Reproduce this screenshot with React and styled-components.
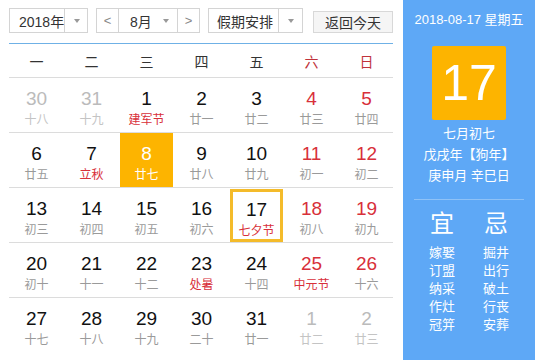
import React from "react";
import styled, { createGlobalStyle } from "styled-components";

const GlobalStyle = createGlobalStyle`
  html, body {
    margin: 0;
    padding: 0;
    background: #fff;
  }
  body {
    font-family: "Liberation Sans", "Noto Sans CJK SC", sans-serif;
  }
`;

const Wrapper = styled.div`
  display: flex;
  width: 535px;
  height: 360px;
  overflow: hidden;
`;

const Main = styled.div`
  width: 385px;
  padding: 8px 9px 0 9px;
`;

const Toolbar = styled.div`
  display: flex;
  align-items: center;
  height: 25px;
  margin-bottom: 10px;
`;

const SelectBox = styled.div`
  display: flex;
  flex-shrink: 0;
  height: 23px;
  width: ${(props) => props.width};
  border: 1px solid #d4d4d4;
  margin-right: ${(props) => props.gap || "8px"};
  font-size: 14px;
  color: #333;
  white-space: nowrap;
`;

const SelectText = styled.div`
  flex: 1;
  display: flex;
  align-items: center;
  justify-content: ${(props) => props.align || "flex-start"};
  padding-left: ${(props) => props.pad || "9px"};
`;

const Caret = styled.div`
  width: 23px;
  flex-shrink: 0;
  display: flex;
  align-items: center;
  justify-content: center;
  border-left: ${(props) => (props.noline ? "none" : "1px solid #d4d4d4")};
  &::after {
    content: "";
    border-left: 3.5px solid transparent;
    border-right: 3.5px solid transparent;
    border-top: 4px solid #999;
  }
`;

const Arrow = styled.div`
  width: 21px;
  flex-shrink: 0;
  display: flex;
  align-items: center;
  justify-content: center;
  color: #888;
  font-size: 13px;
  border-left: ${(props) => (props.left ? "1px solid #d4d4d4" : "none")};
  border-right: ${(props) => (props.right ? "1px solid #d4d4d4" : "none")};
`;

const TodayButton = styled.button`
  width: 80px;
  flex-shrink: 0;
  margin-left: 2px;
  border: 1px solid #d8d8d8;
  background: #f5f5f5;
  color: #333;
  font-size: 14px;
  font-family: inherit;
  padding: 0;
  margin-top: 3px;
  height: 22px;
  white-space: nowrap;
`;

const Table = styled.div`
  border-top: 1px solid #6fb1e6;
  width: 384px;
`;

const Grid = styled.div`
  display: grid;
  grid-template-columns: repeat(7, 55px);
  border-bottom: ${(props) => (props.last ? "none" : "1px solid #dcdcdc")};
  height: ${(props) => props.height};
`;

const Weekday = styled.div`
  display: flex;
  align-items: center;
  justify-content: center;
  font-size: 14px;
  color: ${(props) => (props.weekend ? "#c0333b" : "#333")};
`;

const Cell = styled.div`
  margin: ${(props) => (props.today ? "1px 1px 0 1px" : "0 1px")};
  box-sizing: border-box;
  display: flex;
  flex-direction: column;
  align-items: center;
  padding-top: ${(props) => (props.today ? "7px" : "10px")};
  background: ${(props) => (props.selected ? "#fdb400" : "transparent")};
  border: ${(props) => (props.today ? "3px solid #f4bb2a" : "none")};
`;

const DayNum = styled.div`
  font-size: 19px;
  line-height: 22px;
  color: ${(props) => props.color};
`;

const Lunar = styled.div`
  font-size: 12px;
  line-height: 16px;
  margin-top: 2px;
  color: ${(props) => props.color};
`;

const Side = styled.div`
  flex: 1;
  background: #5ea8f6;
  color: #fff;
  display: flex;
  flex-direction: column;
  align-items: center;
  padding-top: 11px;
`;

const SideDate = styled.div`
  font-size: 13px;
  line-height: 18px;
`;

const BigDay = styled.div`
  width: 74px;
  height: 74px;
  margin-top: 17px;
  background: #fdb400;
  border-radius: 2px;
  display: flex;
  align-items: center;
  justify-content: center;
  font-size: 50px;
  line-height: 1;
`;

const SideLine = styled.div`
  font-size: 13px;
  line-height: 21px;
  margin-top: ${(props) => props.top || "0"};
`;

const Divider = styled.div`
  width: 110px;
  height: 1px;
  background: #8fc2f7;
  margin: 13px 0 9px 0;
`;

const LuckRow = styled.div`
  display: flex;
  gap: 24px;
`;

const LuckCol = styled.div`
  display: flex;
  flex-direction: column;
  align-items: center;
  width: 30px;
`;

const LuckTitle = styled.div`
  font-size: 24px;
  line-height: 30px;
  margin-bottom: 5px;
`;

const LuckItem = styled.div`
  font-size: 13px;
  line-height: 18px;
`;

const RED = "#d8303a";
const BLACK = "#111";
const LGREY = "#9a9a9a";

// [day, lunar, type] o: other month, s: selected, t: today, f: festival
const weeks = [
  [["30", "十八", "o"], ["31", "十九", "o"], ["1", "建军节", "f"], ["2", "廿一"], ["3", "廿二"], ["4", "廿三"], ["5", "廿四"]],
  [["6", "廿五"], ["7", "立秋", "f"], ["8", "廿七", "s"], ["9", "廿八"], ["10", "廿九"], ["11", "初一"], ["12", "初二"]],
  [["13", "初三"], ["14", "初四"], ["15", "初五"], ["16", "初六"], ["17", "七夕节", "t"], ["18", "初八"], ["19", "初九"]],
  [["20", "初十"], ["21", "十一"], ["22", "十二"], ["23", "处暑", "f"], ["24", "十四"], ["25", "中元节", "f"], ["26", "十六"]],
  [["27", "十七"], ["28", "十八"], ["29", "十九"], ["30", "二十"], ["31", "廿一"], ["1", "廿二", "o"], ["2", "廿三", "o"]],
];

const dayColor = (type, i) => {
  if (type === "o") return "#bbb";
  if (type === "s") return "#fff";
  if (i >= 5) return RED;
  return BLACK;
};

const lunarColor = (type) => {
  if (type === "o") return "#c4c4c4";
  if (type === "s") return "#fff";
  if (type === "f" || type === "t") return RED;
  return LGREY;
};

const yi = ["嫁娶", "订盟", "纳采", "作灶", "冠笄"];
const ji = ["掘井", "出行", "破土", "行丧", "安葬"];

const App = () => {
  return (
    <Wrapper>
      <GlobalStyle />
      <Main>
        <Toolbar>
          <SelectBox width="77px">
            <SelectText>2018年</SelectText>
            <Caret />
          </SelectBox>
          <SelectBox width="102px">
            <Arrow right>&lt;</Arrow>
            <SelectText pad="11px">8月</SelectText>
            <Caret noline />
            <Arrow left>&gt;</Arrow>
          </SelectBox>
          <SelectBox width="93px" gap="8px">
            <SelectText pad="8px">假期安排</SelectText>
            <Caret />
          </SelectBox>
          <TodayButton>返回今天</TodayButton>
        </Toolbar>
        <Table>
          <Grid height="33px">
            {["一", "二", "三", "四", "五", "六", "日"].map((d, i) => (
              <Weekday key={d} weekend={i >= 5}>
                {d}
              </Weekday>
            ))}
          </Grid>
          {weeks.map((week, r) => (
            <Grid key={r} height="54px" last={r === weeks.length - 1}>
              {week.map(([day, lunar, type], i) => (
                <Cell key={i} selected={type === "s"} today={type === "t"}>
                  <DayNum color={dayColor(type, i)}>{day}</DayNum>
                  <Lunar color={lunarColor(type)}>{lunar}</Lunar>
                </Cell>
              ))}
            </Grid>
          ))}
        </Table>
      </Main>
      <Side>
        <SideDate>2018-08-17 星期五</SideDate>
        <BigDay>17</BigDay>
        <SideLine top="3px">七月初七</SideLine>
        <SideLine>戊戌年【狗年】</SideLine>
        <SideLine>庚申月 辛巳日</SideLine>
        <Divider />
        <LuckRow>
          <LuckCol>
            <LuckTitle>宜</LuckTitle>
            {yi.map((t) => (
              <LuckItem key={t}>{t}</LuckItem>
            ))}
          </LuckCol>
          <LuckCol>
            <LuckTitle>忌</LuckTitle>
            {ji.map((t) => (
              <LuckItem key={t}>{t}</LuckItem>
            ))}
          </LuckCol>
        </LuckRow>
      </Side>
    </Wrapper>
  );
};

export default App;
